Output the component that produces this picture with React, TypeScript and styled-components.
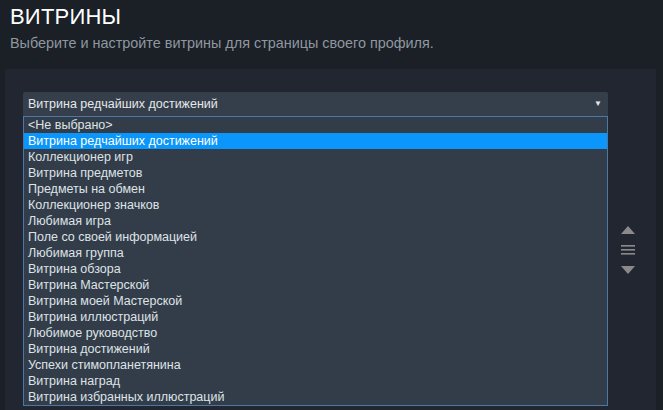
import styled, { createGlobalStyle } from 'styled-components';

const GlobalStyle = createGlobalStyle`
  html, body {
    margin: 0;
    padding: 0;
    background: #1b1f26;
    overflow: hidden;
  }
  body {
    font-family: "Liberation Sans", Arial, sans-serif;
  }
`;

const Page = styled.div({
  width: 663,
  height: 410,
  background: '#1b1f26',
  display: 'flex',
  flexDirection: 'column',
});

const Header = styled.div({
  padding: '4px 10px 0 10px',
  height: 65,
  boxSizing: 'border-box',
});

const Title = styled.h1({
  margin: 0,
  fontSize: 22,
  fontWeight: 400,
  lineHeight: '26px',
  color: '#ffffff',
  letterSpacing: 0.2,
});

const Subtitle = styled.div({
  marginTop: 5,
  fontSize: 14.4,
  lineHeight: '16px',
  color: '#8f98a0',
});

const Panel = styled.div({
  marginTop: 4,
  marginLeft: 5,
  width: 651,
  flex: 1,
  background: '#212630',
  boxSizing: 'border-box',
  padding: '23px 0 0 18px',
  display: 'flex',
  alignItems: 'flex-start',
});

const SelectColumn = styled.div({
  width: 585,
  display: 'flex',
  flexDirection: 'column',
});

const SelectBox = styled.div({
  height: 24,
  background: '#353f4c',
  borderRadius: '2px 2px 0 0',
  display: 'flex',
  alignItems: 'center',
  justifyContent: 'space-between',
  padding: '0 6px 0 5px',
  color: '#e6e8ea',
  fontSize: 12.5,
});

const Arrow = styled.span({
  fontSize: 8,
  color: '#e6e8ea',
  marginTop: -2,
});

const OptionList = styled.div({
  border: '1px solid #4b78a6',
  background: '#333d4a',
  display: 'flex',
  flexDirection: 'column',
});

const Option = styled.div<{ $active?: boolean }>((props) => ({
  height: 16,
  lineHeight: '16px',
  fontSize: 12.5,
  paddingLeft: 4,
  color: props.$active ? '#ffffff' : '#dfe3e6',
  background: props.$active ? '#0a96fa' : 'transparent',
  whiteSpace: 'nowrap',
}));

const Controls = styled.div({
  marginLeft: 12,
  paddingTop: 134,
  width: 15,
  display: 'flex',
  flexDirection: 'column',
  alignItems: 'center',
  gap: 11,
});

const options = [
  '<Не выбрано>',
  'Витрина редчайших достижений',
  'Коллекционер игр',
  'Витрина предметов',
  'Предметы на обмен',
  'Коллекционер значков',
  'Любимая игра',
  'Поле со своей информацией',
  'Любимая группа',
  'Витрина обзора',
  'Витрина Мастерской',
  'Витрина моей Мастерской',
  'Витрина иллюстраций',
  'Любимое руководство',
  'Витрина достижений',
  'Успехи стимопланетянина',
  'Витрина наград',
  'Витрина избранных иллюстраций',
];

export default function App() {
  const selected = 1;
  return (
    <>
      <GlobalStyle />
      <Page>
        <Header>
          <Title>ВИТРИНЫ</Title>
          <Subtitle>Выберите и настройте витрины для страницы своего профиля.</Subtitle>
        </Header>
        <Panel>
          <SelectColumn>
            <SelectBox>
              <span>{options[selected]}</span>
              <Arrow>▼</Arrow>
            </SelectBox>
            <OptionList>
              {options.map((o, i) => (
                <Option key={o} $active={i === selected}>{o}</Option>
              ))}
            </OptionList>
          </SelectColumn>
          <Controls>
            <svg width="14" height="8" viewBox="0 0 14 8">
              <path d="M7 0 L14 8 L0 8 Z" fill="#8a8a8a" />
            </svg>
            <svg width="14" height="10" viewBox="0 0 14 10">
              <rect x="0" y="0" width="14" height="1.6" fill="#8a8a8a" />
              <rect x="0" y="4" width="14" height="1.6" fill="#8a8a8a" />
              <rect x="0" y="8" width="14" height="1.6" fill="#8a8a8a" />
            </svg>
            <svg width="14" height="8" viewBox="0 0 14 8">
              <path d="M0 0 L14 0 L7 8 Z" fill="#8a8a8a" />
            </svg>
          </Controls>
        </Panel>
      </Page>
    </>
  );
}
